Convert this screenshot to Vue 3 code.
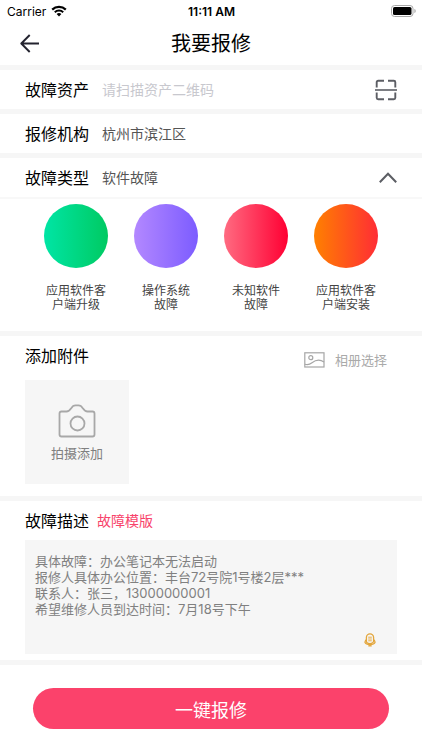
<script setup>
import { ref } from 'vue'

const asset = ref('')
const expanded = ref(true)
const selected = ref('软件故障')
const description = ref(
  '具体故障：办公笔记本无法启动\n报修人具体办公位置：丰台72号院1号楼2层***\n联系人：张三，13000000001\n希望维修人员到达时间：7月18号下午'
)

const faultTypes = [
  { tone: 'green', lines: ['应用软件客', '户端升级'] },
  { tone: 'violet', lines: ['操作系统', '故障'] },
  { tone: 'red', lines: ['未知软件', '故障'] },
  { tone: 'orange', lines: ['应用软件客', '户端安装'] }
]
</script>

<template>
  <div class="page">
    <div class="status">
      <div class="carrier">
        <span>Carrier</span>
        <svg width="16" height="12" viewBox="0 0 16 12" aria-hidden="true">
          <path d="M1.2 4.6a9.8 9.8 0 0 1 13.6 0" fill="none" stroke="#000" stroke-width="2.2" />
          <path d="M3.8 7.3a6 6 0 0 1 8.4 0" fill="none" stroke="#000" stroke-width="2" />
          <path d="M8 11.6 5.6 9.1a3.4 3.4 0 0 1 4.8 0z" />
        </svg>
      </div>
      <span class="clock">11:11 AM</span>
      <div class="battery">
        <svg width="25" height="12" viewBox="0 0 25 12" aria-hidden="true">
          <rect x="0.5" y="0.5" width="21.5" height="11" rx="3" fill="#fff" stroke="#a8a8a8" />
          <rect x="2" y="2" width="18.5" height="8" rx="1.6" />
          <path d="M23.4 4v4c.9-.4 1.3-1.1 1.3-2s-.4-1.6-1.3-2z" fill="#a8a8a8" />
        </svg>
      </div>
    </div>

    <header class="nav">
      <button class="icon-btn" type="button" aria-label="返回">
        <svg width="20" height="20" viewBox="0 0 20 20" aria-hidden="true">
          <path d="M9.7 1 1.3 9.500l8.400 8.500M1.300 9.500H19" fill="none" stroke="#23232f" stroke-width="1.900" stroke-linejoin="round" />
        </svg>
      </button>
      <h1>我要报修</h1>
    </header>

    <section class="row">
      <label class="label" for="asset">故障资产</label>
      <input id="asset" v-model="asset" class="field" type="text" placeholder="请扫描资产二维码" />
      <button class="icon-btn" type="button" aria-label="扫描二维码">
        <svg width="22" height="22" viewBox="0 0 22 22" aria-hidden="true">
          <g fill="none" stroke="#5c5e64" stroke-width="1.900">
            <path d="M1.700 8.500V3.200q0-1.500 1.500-1.500H9M13 1.700h5.800q1.500 0 1.500 1.500v5.300M1.700 13.500v5.300q0 1.500 1.500 1.500H9M13 20.300h5.800q1.500 0 1.500-1.500v-5.300" />
            <path d="M0 11h22" stroke-width="1.600" />
          </g>
        </svg>
      </button>
    </section>

    <section class="row">
      <span class="label">报修机构</span>
      <span class="value">杭州市滨江区</span>
    </section>

    <section class="types">
      <div class="types-head">
        <span class="label">故障类型</span>
        <span class="value">{{ selected }}</span>
        <button class="icon-btn" type="button" aria-label="收起" :aria-expanded="expanded" @click="expanded = !expanded">
          <svg width="18" height="12" viewBox="0 0 18 12" aria-hidden="true">
            <path d="M.8 10.300 9 1.700l8.200 8.600" fill="none" stroke="#5c5e64" stroke-width="2" />
          </svg>
        </button>
      </div>
      <div v-if="expanded" class="type-grid">
        <button v-for="(type, i) in faultTypes" :key="i" class="type" type="button">
          <span class="disc" :class="type.tone"></span>
          <span class="type-name">
            <span v-for="line in type.lines" :key="line">{{ line }}</span>
          </span>
        </button>
      </div>
    </section>

    <section class="attach">
      <div class="attach-head">
        <h2 class="label">添加附件</h2>
        <button class="album" type="button">
          <svg width="21" height="16" viewBox="0 0 21 16" aria-hidden="true">
            <g fill="none" stroke="#a6a6a6" stroke-width="1.200">
              <rect x="0.800" y="0.800" width="19.200" height="14.200" />
              <circle cx="6.800" cy="5.700" r="2" />
              <path d="M.8 12.200c3 1 5 .3 7.200-1.500 3.200-2.500 7-4.200 12-.7" />
            </g>
          </svg>
          <span>相册选择</span>
        </button>
      </div>
      <button class="shoot" type="button">
        <svg width="38" height="34" viewBox="0 0 38 34" aria-hidden="true">
          <g fill="none" stroke="#a8a8a8" stroke-width="1.800" stroke-linejoin="round">
            <path d="M3.500 7.500h5c2.500 0 3.500-1.500 4.700-3.300C14.500 2 15.500 1.300 17.500 1.300h3c2 0 3 .7 4.300 2.900 1.200 1.800 2.200 3.300 4.700 3.300h5q2 0 2 2v21q0 2-2 2h-31q-2 0-2-2v-21q0-2 2-2z" />
            <circle cx="19.500" cy="19.500" r="7" />
          </g>
        </svg>
        <span>拍摄添加</span>
      </button>
    </section>

    <section class="describe">
      <div class="describe-head">
        <label class="label" for="description">故障描述</label>
        <a class="template" href="#">故障模版</a>
      </div>
      <div class="editor">
        <textarea id="description" v-model="description"></textarea>
        <button class="mic" type="button" aria-label="语音输入">
          <svg width="12" height="14" viewBox="0 0 12 14" aria-hidden="true">
            <g fill="none" stroke="#e3a63c">
              <path d="M2.400 8V4.400a3.600 3.600 0 0 1 7.200 0V8a3.600 2.600 0 0 1-7.200 0z" stroke-width="1.300" />
              <path d="M1.800 6.800.9 9.300c.6 1.500 2.600 2.300 5.100 2.300s4.500-.8 5.100-2.300l-.9-2.500M4.300 12.900h3.400" stroke-width="1.200" />
              <path d="M4.200 4.200h3.600M4.200 6h3.600M4.200 7.800h3.600" stroke-width="0.900" />
            </g>
          </svg>
        </button>
      </div>
    </section>

    <footer class="foot">
      <button class="submit" type="button">一键报修</button>
    </footer>
  </div>
</template>

<style>
body {
  margin: 0;
  background: #fff;
}
</style>

<style scoped>
.page {
  font-family: Inter, "Noto Sans CJK SC", sans-serif;
  font-size: 14px;
  color: #000;
  background: #fff;
}

button,
input,
textarea {
  margin: 0;
  padding: 0;
  border: 0;
  background: none;
  font: inherit;
  color: inherit;
}

button {
  cursor: pointer;
}

svg {
  display: block;
  flex: none;
}

.status {
  display: grid;
  grid-template-columns: 1fr auto 1fr;
  align-items: center;
  height: 22px;
  padding: 0 6px 0 7px;
  font-size: 12px;
}

.carrier {
  display: flex;
  align-items: center;
  gap: 5px;
}

.clock {
  font-weight: 600;
}

.battery {
  display: flex;
  justify-content: flex-end;
}

.nav {
  display: grid;
  grid-template-columns: 1fr auto 1fr;
  align-items: center;
  height: 43px;
  padding: 0 20px;
}

.nav h1 {
  margin: 0;
  font-size: 20px;
  line-height: 24px;
  font-weight: 400;
}

.icon-btn {
  display: flex;
  justify-self: start;
}

section,
.foot {
  border-top: 5px solid #f6f6f6;
}

.row,
.types-head {
  display: flex;
  align-items: center;
  height: 39px;
  padding: 0 25px;
}

.label {
  margin: 0;
  font-size: 16px;
  line-height: 24px;
  font-weight: 400;
}

.field,
.value {
  flex: 1;
  min-width: 0;
  margin-left: 13px;
  font-size: 14px;
  line-height: 20px;
  color: #555;
}

.field {
  outline: none;
}

.field::placeholder {
  color: #c8c8ce;
  opacity: 1;
}

.type-grid {
  display: grid;
  grid-template-columns: repeat(4, 1fr);
  padding: 5px 31px 19px;
  border-top: 2px solid #f8f8f8;
}

.type {
  display: flex;
  flex-direction: column;
  align-items: center;
  gap: 16px;
}

.disc {
  width: 64px;
  height: 64px;
  border-radius: 50%;
}

.green {
  background: linear-gradient(90deg, #00e5a5, #00ca62);
}

.violet {
  background: linear-gradient(90deg, #b388ff, #7c5cff);
}

.red {
  background: linear-gradient(90deg, #ff6b81, #ff0033);
}

.orange {
  background: linear-gradient(90deg, #ff8000, #ff2d35);
}

.type-name {
  display: flex;
  flex-direction: column;
  font-size: 12px;
  line-height: 14px;
  color: #444;
}

.attach {
  padding: 8px 25px 12px;
}

.attach-head {
  display: flex;
  justify-content: space-between;
  align-items: flex-start;
  padding-bottom: 11px;
}

.album {
  display: flex;
  align-items: center;
  gap: 10px;
  padding: 7px 10px 0 0;
  font-size: 13px;
  line-height: 18px;
  color: #aaa;
}

.shoot {
  display: flex;
  flex-direction: column;
  align-items: center;
  justify-content: center;
  gap: 6px;
  width: 104px;
  height: 104px;
  padding-top: 2px;
  background: #f6f6f6;
  font-size: 13px;
  line-height: 18px;
  color: #808080;
}

.describe {
  padding: 8px 25px 6px;
}

.describe-head {
  display: flex;
  align-items: center;
  gap: 8px;
  padding-bottom: 7px;
}

.template {
  font-size: 14px;
  line-height: 20px;
  color: #f8436b;
  text-decoration: none;
}

.editor {
  position: relative;
  display: flex;
  background: #f6f6f6;
}

.editor textarea {
  flex: 1;
  height: 114px;
  padding: 13px 10px;
  box-sizing: border-box;
  font-size: 13px;
  line-height: 16px;
  color: #808080;
  resize: none;
  outline: none;
}

.mic {
  position: absolute;
  right: 21px;
  bottom: 7px;
}

.foot {
  padding: 23px 33px 20px;
}

.submit {
  display: block;
  width: 100%;
  height: 41px;
  border-radius: 21px;
  background: #fb426b;
  font-size: 18px;
  color: #fff;
}
</style>
